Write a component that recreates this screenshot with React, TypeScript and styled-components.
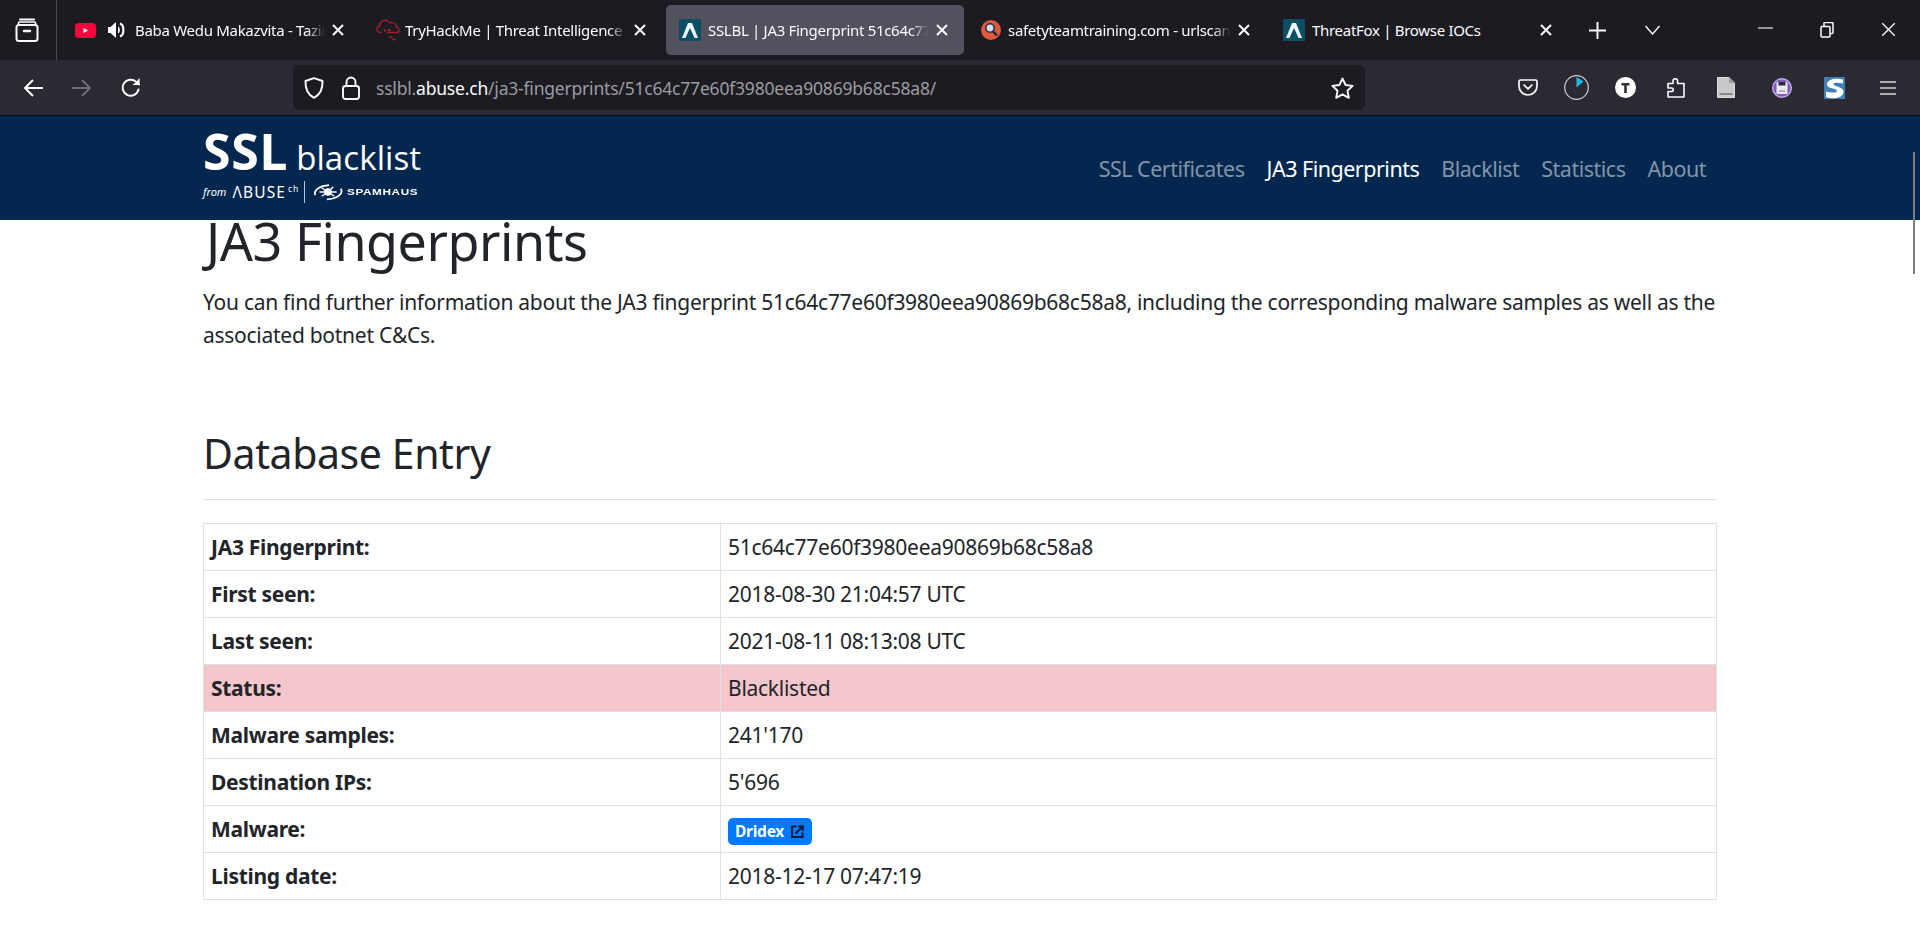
import React from 'react';
import styled, { createGlobalStyle } from 'styled-components';

const Global = createGlobalStyle`
  html, body { margin: 0; padding: 0; width: 1920px; height: 935px; overflow: hidden; background: #fff; }
  body { font-family: "Noto Sans", "Liberation Sans", sans-serif; color: #212529; }
  * { box-sizing: border-box; }
`;

const Page = styled.div`
  position: relative;
  width: 1920px;
  height: 935px;
  overflow: hidden;
  display: flex;
  flex-direction: column;
`;

/* ---------- browser chrome ---------- */
const TabStrip = styled.div`
  height: 60px;
  background: #1c1b22;
  display: flex;
  align-items: center;
  color: #fbfbfe;
`;
const ListAll = styled.div`
  width: 57px;
  height: 60px;
  border-right: 1px solid #4a4a52;
  display: flex;
  align-items: center;
  justify-content: center;
  flex: none;
  padding-right: 3px;
`;
const Tabs = styled.div`
  display: flex;
  gap: 4px;
  padding-left: 5px;
`;
const Tab = styled.div<{ $active?: boolean }>`
  width: 298px;
  height: 50px;
  border-radius: 5px;
  background: ${p => (p.$active ? '#52525e' : 'transparent')};
  display: flex;
  align-items: center;
  padding: 0 16px 0 13px;
  gap: 7px;
`;
const TabTitle = styled.div<{ $fade: boolean }>`
  flex: 1;
  min-width: 0;
  white-space: nowrap;
  overflow: hidden;
  font-size: 15px;
  letter-spacing: -0.3px;
  padding-right: 2px;
  color: #fbfbfe;
  ${p => p.$fade && 'mask-image: linear-gradient(to right, #000 calc(100% - 18px), transparent 100%);'}
`;
const CloseBox = styled.svg`
  flex: none;
  display: block;
`;
const StripButton = styled.div<{ $w: number }>`
  width: ${p => p.$w}px;
  display: flex;
  justify-content: center;
  flex: none;
`;
const PlusSlot = styled(StripButton)`
  margin-left: 5px;
`;
const Spacer = styled.div`
  flex: 1;
`;
const WindowControls = styled.div`
  display: flex;
  padding-right: 1px;
`;
const WindowButton = styled.div`
  width: 61.5px;
  display: flex;
  justify-content: center;
`;

const Toolbar = styled.div`
  height: 55px;
  background: #2b2a33;
  display: flex;
  align-items: center;
  color: #fbfbfe;
`;
const NavButtons = styled.div`
  width: 293px;
  flex: none;
  display: flex;
  padding-left: 8px;
`;
const ToolButton = styled.div<{ $extra?: number }>`
  width: 49px;
  margin-left: ${p => p.$extra ?? 0}px;
  display: flex;
  justify-content: center;
  align-items: center;
  flex: none;
`;
const UrlBar = styled.div`
  width: 1072px;
  height: 45px;
  background: #1c1b22;
  border-radius: 6px;
  display: flex;
  align-items: center;
  padding: 0 11px 0 9px;
  flex: none;
`;
const UrlIcon = styled.div<{ $w: number }>`
  width: ${p => p.$w}px;
  display: flex;
  justify-content: center;
  flex: none;
`;
const UrlText = styled.div`
  flex: 1;
  font-size: 17.5px;
  letter-spacing: -0.2px;
  color: #9b9ba1;
  white-space: nowrap;
`;
const UrlHost = styled.span`
  color: #fbfbfe;
`;
const ToolIcons = styled.div`
  flex: 1;
  display: flex;
  justify-content: flex-end;
  padding-right: 8px;
`;

/* ---------- site navbar ---------- */
const Navbar = styled.nav`
  height: 105px;
  background: #03274f;
  border-top: 1px solid #0c0c14;
  display: flex;
  align-items: center;
  justify-content: space-between;
  padding: 0 214px 0 203px;
  flex: none;
`;
const Brand = styled.div`
  display: flex;
  flex-direction: column;
  color: #fff;
`;
const BrandTop = styled.div`
  display: flex;
  align-items: baseline;
  line-height: 36px;
  height: 48px;
`;
const BrandSSL = styled.span`
  font-family: "Open Sans", sans-serif;
  font-weight: 700;
  font-size: 50px;
  letter-spacing: 0.6px;
  margin-right: 8px;
`;
const BrandWord = styled.span`
  font-family: "Open Sans", sans-serif;
  font-size: 33px;
  letter-spacing: 0.1px;
`;
const BrandBottom = styled.div`
  display: flex;
  align-items: center;
  height: 22px;
  line-height: 22px;
`;
const BrandFrom = styled.span`
  font-style: italic;
  font-size: 11px;
  margin-right: 6px;
`;
const BrandAbuse = styled.span`
  font-size: 15.5px;
  letter-spacing: 1.1px;
`;
const BrandCh = styled.sup`
  font-size: 8.5px;
  letter-spacing: 1px;
  margin-left: 2px;
  line-height: 0;
  vertical-align: 6px;
`;
const BrandRule = styled.span`
  width: 1px;
  height: 22px;
  background: #b9c4d0;
  margin: 0 7px 0 5px;
`;
const BrandSpam = styled.span`
  font-family: "Liberation Sans", sans-serif;
  font-weight: 700;
  font-size: 9.4px;
  letter-spacing: 0.5px;
  transform: scaleX(1.25);
  transform-origin: left center;
  margin-left: 3px;
`;
const NavLinks = styled.div`
  display: flex;
  gap: 22px;
`;
const NavLink = styled.a<{ $active?: boolean }>`
  font-size: 21.5px;
  letter-spacing: -0.5px;
  color: ${p => (p.$active ? '#fff' : '#8195a7')};
`;

/* ---------- content ---------- */
const Content = styled.main`
  width: 1514px;
  margin-left: 203px;
`;
const Title = styled.h1`
  margin: -9px 0 0 3px;
  font-size: 52px;
  font-weight: 400;
  line-height: 60px;
  letter-spacing: -0.45px;
`;
const Lead = styled.p`
  margin: 15px 0 0;
  font-size: 21px;
  line-height: 33px;
  letter-spacing: -0.27px;
`;
const Section = styled.h2`
  margin: 75px 0 0;
  font-size: 41px;
  font-weight: 400;
  line-height: 52px;
  padding-bottom: 20px;
  border-bottom: 1px solid #dee2e6;
  letter-spacing: -0.4px;
`;
const EntryTable = styled.table`
  width: 100%;
  margin-top: 23px;
  border-collapse: collapse;
  table-layout: fixed;
`;
const Row = styled.tr<{ $danger?: boolean }>`
  height: 47px;
  background: ${p => (p.$danger ? '#f5c6cb' : 'transparent')};
`;
const Label = styled.th`
  width: 517px;
  border: 1px solid #dee2e6;
  padding: 0 7px;
  text-align: left;
  font-size: 21px;
  font-weight: 700;
  letter-spacing: -0.3px;
`;
const Value = styled.td`
  border: 1px solid #dee2e6;
  padding: 0 7px;
  font-size: 21px;
  letter-spacing: -0.27px;
`;
const Badge = styled.a`
  display: inline-flex;
  align-items: center;
  gap: 7px;
  height: 27px;
  padding: 0 8px 0 7px;
  border-radius: 5px;
  background: #007bff;
  color: #fff;
  font-size: 15.5px;
  font-weight: 700;
  vertical-align: middle;
  position: relative;
  top: 1px;
`;
const ScrollThumb = styled.div`
  position: absolute;
  right: 5px;
  top: 152px;
  width: 2px;
  height: 122px;
  background: #7d7d7d;
`;

/* ---------- drawings ---------- */
const S = { stroke: 'currentColor', fill: 'none', strokeWidth: 2, strokeLinecap: 'round' as const, strokeLinejoin: 'round' as const };

const ArchiveIcon = () => (
  <svg width="24" height="26" viewBox="0 0 24 26" {...S}>
    <path d="M5 2.5h14" />
    <rect x="1.5" y="8" width="21" height="16" rx="2.5" />
    <path d="M3 7.5 4 5h16l1 2.5" strokeWidth="1.6" />
    <path d="M9 14h6" strokeWidth="2.4" />
  </svg>
);
const Close = ({ size = 12, w = 2 }: { size?: number; w?: number }) => (
  <CloseBox width={size} height={size} viewBox="0 0 12 12" {...S} strokeWidth={w} strokeLinecap="butt">
    <path d="M1 1l10 10M11 1 1 11" />
  </CloseBox>
);
const Youtube = () => (
  <svg width="21" height="15" viewBox="0 0 21 15" style={{ flex: 'none' }}>
    <rect width="21" height="15" rx="3.5" fill="#f5073b" />
    <path d="M8.500 5v5l4.500-2.500z" fill="#fff" />
  </svg>
);
const Speaker = () => (
  <svg width="18" height="16" viewBox="0 0 18 16" fill="#fbfbfe" style={{ flex: 'none', margin: '0 2px 0 5px' }}>
    <path d="M0 5h2.500L8 0v16l-5.500-5H0z" />
    <path d="M12 1.500c4.500 1.500 4.500 11.500 0 13" stroke="#fbfbfe" strokeWidth="2.200" fill="none" />
    <path d="M10 4.500c2.500 1 2.500 6 0 7z" />
  </svg>
);
const Thm = () => (
  <svg width="24" height="22" viewBox="0 0 24 22" fill="none" stroke="#a3202a" strokeWidth="1.300" style={{ flex: 'none', margin: '0 -2px 0 -1px' }}>
    <path d="M5.500 13.500H4a3.300 3.300 0 0 1-.4-6.500A5.500 5.500 0 0 1 13.800 4 4.600 4.600 0 0 1 20.500 8.500a2.800 2.800 0 0 1 1.500 5H11" />
    <circle cx="9" cy="11.500" r="0.700" fill="#a3202a" />
    <circle cx="13" cy="11" r="0.700" fill="#a3202a" />
    <path d="M13 18h3.500M16 20.500h3.500" strokeWidth="1.600" />
  </svg>
);
const Abuse = () => (
  <svg width="22" height="22" viewBox="0 0 22 22" style={{ flex: 'none' }}>
    <rect width="22" height="22" fill="#0e4d63" />
    <path d="M9 4h4l6 15h-3.500L11 9 6.500 19H3z" fill="#e8f6f8" />
  </svg>
);
const Urlscan = () => (
  <svg width="20" height="20" viewBox="0 0 20 20" style={{ flex: 'none' }}>
    <circle cx="10" cy="10" r="10" fill="#dc5b3f" />
    <circle cx="9" cy="8" r="4.200" fill="#cfe0ee" stroke="#2c2f4a" strokeWidth="1.600" />
    <path d="M12 11.500l4 4" stroke="#23243a" strokeWidth="2.400" />
  </svg>
);
const Plus = () => (
  <svg width="17" height="17" viewBox="0 0 16 16" stroke="#fbfbfe" strokeWidth="1.800"><path d="M8 0v16M0 8h16" /></svg>
);
const Chevron = () => (
  <svg width="17" height="10" viewBox="0 0 16 10" fill="none" stroke="#fbfbfe" strokeWidth="1.400"><path d="M1 1l7 8 7-8" /></svg>
);
const MinIcon = () => (
  <svg width="15" height="14" viewBox="0 0 15 14" stroke="#e8e8ea" strokeWidth="1.200"><path d="M0 6h15" /></svg>
);
const RestoreIcon = () => (
  <svg width="14" height="16" viewBox="0 0 14 16" fill="none" stroke="#fbfbfe" strokeWidth="1.500">
    <rect x="1" y="4.500" width="9" height="10.500" rx="1" />
    <path d="M4 4.500V1.500a1 1 0 0 1 1-1h7a1 1 0 0 1 1 1v9a1 1 0 0 1-1 1h-2" />
  </svg>
);
const BackIcon = ({ flip, dim }: { flip?: boolean; dim?: boolean }) => (
  <svg width="20" height="18" viewBox="0 0 20 18" fill="none" stroke={dim ? '#6e6d75' : '#fbfbfe'} strokeWidth="2" style={flip ? { transform: 'scaleX(-1)' } : undefined}>
    <path d="M20 9H2M10 1 2 9l8 8" />
  </svg>
);
const ReloadIcon = () => (
  <svg width="20" height="20" viewBox="0 0 20 20" fill="none" stroke="#fbfbfe" strokeWidth="1.900" strokeLinecap="round">
    <path d="M17.500 11.500a8 8 0 1 1-2.300-7.600L18 6.500" />
    <path d="M18 1v5.500h-5.500" fill="#fbfbfe" strokeWidth="1.200" />
  </svg>
);
const ShieldIcon = () => (
  <svg width="20" height="22" viewBox="0 0 20 22" fill="none" stroke="#fbfbfe" strokeWidth="1.900" strokeLinejoin="round">
    <path d="M10 1.200 18.500 4c.3 7.500-2 13.500-8.500 16.800C3.500 17.500 1.200 11.500 1.500 4z" />
  </svg>
);
const LockIcon = () => (
  <svg width="18" height="24" viewBox="0 0 18 24" fill="none" stroke="#fbfbfe" strokeWidth="1.900">
    <rect x="1" y="10" width="16" height="13" rx="2.500" />
    <path d="M4.500 10V6a4.500 4.500 0 0 1 9 0v4" />
  </svg>
);
const StarIcon = () => (
  <svg width="23" height="22" viewBox="0 0 23 22" fill="none" stroke="#fbfbfe" strokeWidth="1.900" strokeLinejoin="round">
    <path d="M11.500 1.500 14.600 8l7 .9-5.100 4.900 1.300 7-6.300-3.400-6.300 3.400 1.300-7L1.400 8.900l7-.9z" />
  </svg>
);
const PocketIcon = () => (
  <svg width="20" height="17" viewBox="0 0 20 17" fill="none" stroke="#fbfbfe" strokeWidth="1.700" strokeLinecap="round" strokeLinejoin="round">
    <path d="M2.500 1h15A1.500 1.500 0 0 1 19 2.500V7a9 9 0 0 1-9 9 9 9 0 0 1-9-9V2.500A1.500 1.500 0 0 1 2.500 1z" />
    <path d="M6 6l4 3.800L14 6" />
  </svg>
);
const TimerIcon = () => (
  <svg width="25" height="25" viewBox="0 0 25 25">
    <circle cx="12.500" cy="12.500" r="11.800" fill="none" stroke="#cfcfd4" strokeWidth="1.200" />
    <path d="M12.500 2v10.500L19.500 6.500z" fill="#1cb8e8" />
  </svg>
);
const TBadge = () => (
  <svg width="21" height="21" viewBox="0 0 21 21">
    <circle cx="10.500" cy="10.500" r="10.500" fill="#fff" />
    <path d="M6.500 6h8v2.400h-2.700V16H9.200V8.400H6.500z" fill="#333" />
  </svg>
);
const PuzzleIcon = () => (
  <svg width="18" height="20" viewBox="0 0 18 20" fill="none" stroke="#fbfbfe" strokeWidth="1.600" strokeLinejoin="round">
    <path d="M1 19v-5.500h3.500a1.700 1.700 0 0 0 0-3.500H1V5.500h5V3a2.300 2.300 0 0 1 4.600 0v2.500H17V19z" />
  </svg>
);
const FileIcon = () => (
  <svg width="18" height="21" viewBox="0 0 18 21">
    <path d="M.5.500h11.500l5.500 5.500v14.500H.5z" fill="#c9c9c9" stroke="#dcdcdc" />
    <path d="M12 .500l5.500 5.500H12z" fill="#9a9a9a" />
    <rect x="2.500" y="16" width="13" height="2" fill="#8a8a8a" />
  </svg>
);
const PurpleIcon = () => (
  <svg width="20" height="20" viewBox="0 0 20 20">
    <circle cx="10" cy="10" r="9.300" fill="#7e5bb5" stroke="#c6a9ec" strokeWidth="1.400" />
    <rect x="4.500" y="4" width="11" height="12" rx="1" fill="#ece9f6" />
    <rect x="6.500" y="4" width="7" height="3.500" fill="#2f2a3d" />
    <rect x="7" y="12.500" width="6" height="1.200" fill="#8b88a0" />
  </svg>
);
const SIcon = () => (
  <svg width="21" height="22" viewBox="0 0 21 22">
    <rect width="21" height="22" fill="#3f7fb5" />
    <path d="M19 2.500C12 .500 3 2 3 7.500c0 4.500 10 3.500 10 6.500 0 2-6 2-11 .5V20c7 2.500 17.500 1.500 17.500-5.500 0-5-10-4.500-10-7.500 0-2 5-1.500 9.500-.5z" fill="#fff" />
  </svg>
);
const Hamburger = () => (
  <svg width="16" height="14" viewBox="0 0 16 14" stroke="#d5d5d9" strokeWidth="1.700"><path d="M0 1h16M0 7h16M0 13h16" /></svg>
);
const SpamhausMark = () => (
  <svg width="32" height="20" viewBox="0 0 30 18" fill="none" stroke="#fff">
    <path d="M3 12C1 7 8 3 16 2.500 M27 6c3 5-4 9.500-13 10" strokeWidth="1.600" />
    <path d="M9 5l6 4 5-5M9 13l6-4 6 4M7 9h16" strokeWidth="1.300" />
    <circle cx="15" cy="9" r="3" fill="#fff" />
  </svg>
);
const ExternalIcon = () => (
  <svg width="13" height="13" viewBox="0 0 13 13" fill="none" stroke="#0a1a3c" strokeWidth="2">
    <path d="M5.500 1.500H1v10.500h10.500V7.500" />
    <path d="M4.500 8.500 11 2M7 1.200h4.800V6" strokeWidth="2" />
  </svg>
);

const tabs = [
  { title: 'Baba Wedu Makazvita - Tazira Official Video', icons: [<Youtube key="y" />, <Speaker key="s" />], fade: true },
  { title: 'TryHackMe | Threat Intelligence Tools', icons: [<Thm key="t" />], fade: true },
  { title: 'SSLBL | JA3 Fingerprint 51c64c77e60f3980', icons: [<Abuse key="a" />], active: true, fade: true },
  { title: 'safetyteamtraining.com - urlscan.io', icons: [<Urlscan key="u" />], fade: true },
  { title: 'ThreatFox | Browse IOCs', icons: [<Abuse key="a2" />], fade: false },
];

const links = ['SSL Certificates', 'JA3 Fingerprints', 'Blacklist', 'Statistics', 'About'];

const rows: { label: string; value: React.ReactNode; danger?: boolean }[] = [
  { label: 'JA3 Fingerprint:', value: '51c64c77e60f3980eea90869b68c58a8' },
  { label: 'First seen:', value: '2018-08-30 21:04:57 UTC' },
  { label: 'Last seen:', value: '2021-08-11 08:13:08 UTC' },
  { label: 'Status:', value: 'Blacklisted', danger: true },
  { label: 'Malware samples:', value: "241'170" },
  { label: 'Destination IPs:', value: "5'696" },
  { label: 'Malware:', value: <Badge>Dridex <ExternalIcon /></Badge> },
  { label: 'Listing date:', value: '2018-12-17 07:47:19' },
];

export default function App() {
  return (
    <Page>
      <Global />
      <TabStrip>
        <ListAll><ArchiveIcon /></ListAll>
        <Tabs>
          {tabs.map(t => (
            <Tab key={t.title} $active={t.active}>
              {t.icons}
              <TabTitle $fade={t.fade}>{t.title}</TabTitle>
              <Close />
            </Tab>
          ))}
        </Tabs>
        <PlusSlot $w={48}><Plus /></PlusSlot>
        <StripButton $w={62}><Chevron /></StripButton>
        <Spacer />
        <WindowControls>
          <WindowButton><MinIcon /></WindowButton>
          <WindowButton><RestoreIcon /></WindowButton>
          <WindowButton><Close size={15} w={1.1} /></WindowButton>
        </WindowControls>
      </TabStrip>
      <Toolbar>
        <NavButtons>
          <ToolButton><BackIcon /></ToolButton>
          <ToolButton><BackIcon flip dim /></ToolButton>
          <ToolButton><ReloadIcon /></ToolButton>
        </NavButtons>
        <UrlBar>
          <UrlIcon $w={24}><ShieldIcon /></UrlIcon>
          <UrlIcon $w={50}><LockIcon /></UrlIcon>
          <UrlText>sslbl.<UrlHost>abuse.ch</UrlHost>/ja3-fingerprints/51c64c77e60f3980eea90869b68c58a8/</UrlText>
          <StarIcon />
        </UrlBar>
        <ToolIcons>
          <ToolButton><PocketIcon /></ToolButton>
          <ToolButton><TimerIcon /></ToolButton>
          <ToolButton><TBadge /></ToolButton>
          <ToolButton $extra={1}><PuzzleIcon /></ToolButton>
          <ToolButton $extra={1}><FileIcon /></ToolButton>
          <ToolButton $extra={7}><PurpleIcon /></ToolButton>
          <ToolButton $extra={4}><SIcon /></ToolButton>
          <ToolButton $extra={4}><Hamburger /></ToolButton>
        </ToolIcons>
      </Toolbar>
      <Navbar>
        <Brand>
          <BrandTop>
            <BrandSSL>SSL</BrandSSL>
            <BrandWord>blacklist</BrandWord>
          </BrandTop>
          <BrandBottom>
            <BrandFrom>from</BrandFrom>
            <BrandAbuse>ΛBUSE<BrandCh>ch</BrandCh></BrandAbuse>
            <BrandRule />
            <SpamhausMark />
            <BrandSpam>SPAMHAUS</BrandSpam>
          </BrandBottom>
        </Brand>
        <NavLinks>
          {links.map(l => <NavLink key={l} $active={l === 'JA3 Fingerprints'}>{l}</NavLink>)}
        </NavLinks>
      </Navbar>
      <Content>
        <Title>JA3 Fingerprints</Title>
        <Lead>You can find further information about the JA3 fingerprint 51c64c77e60f3980eea90869b68c58a8, including the corresponding malware samples as well as the associated botnet C&amp;Cs.</Lead>
        <Section>Database Entry</Section>
        <EntryTable>
          <tbody>
            {rows.map(r => (
              <Row key={r.label} $danger={r.danger}>
                <Label>{r.label}</Label>
                <Value>{r.value}</Value>
              </Row>
            ))}
          </tbody>
        </EntryTable>
      </Content>
      <ScrollThumb />
    </Page>
  );
}
